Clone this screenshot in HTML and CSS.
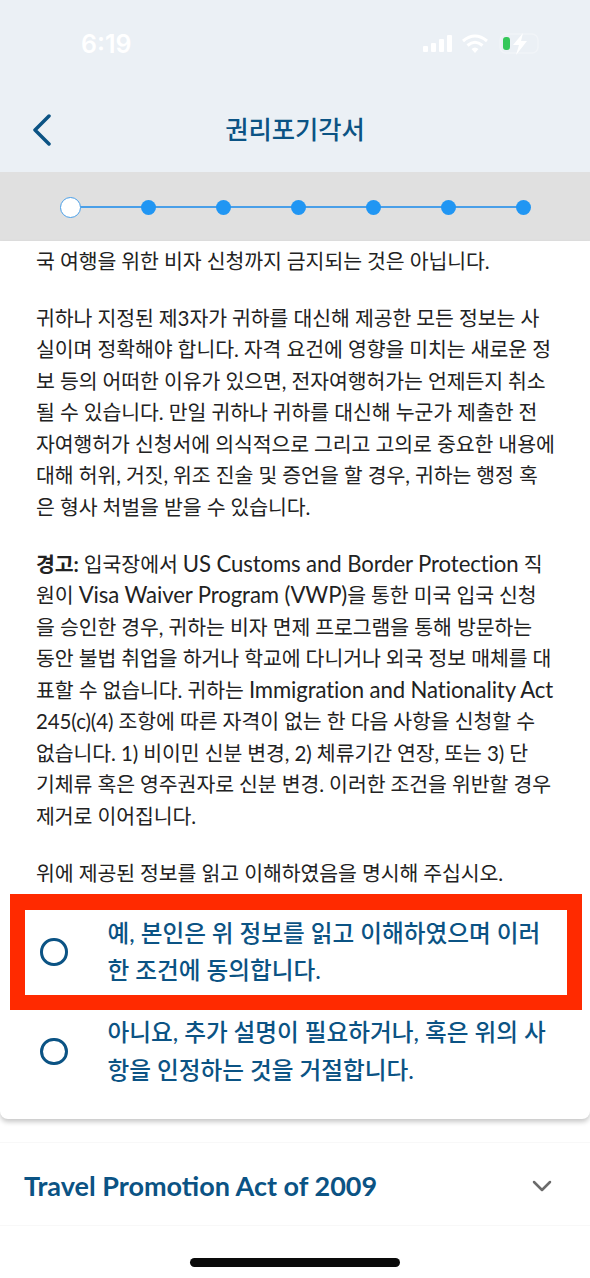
FILE: index.html
```html
<!DOCTYPE html>
<html lang="ko">
<head>
<meta charset="utf-8">
<title>권리포기각서</title>
<link rel="stylesheet" href="styles.css">
</head>
<body>
<div class="page">
  <header class="top">
    <div class="status">
      <span class="time">6:19</span>
      <svg class="status-icons" width="118" height="26" viewBox="0 0 118 26">
        <g fill="#fff">
          <rect x="2" y="15" width="5" height="6" rx="1"/>
          <rect x="10" y="12" width="5" height="9" rx="1"/>
          <rect x="18" y="8" width="5" height="13" rx="1"/>
          <rect x="26" y="4" width="5" height="17" rx="1"/>
        </g>
        <g fill="none" stroke="#fff" stroke-width="3">
          <path d="M42 10 Q54 0 66 10"/>
          <path d="M46.500 14.500 Q54 8 61.500 14.500"/>
        </g>
        <path d="M50.500 18 Q54 15 57.500 18 L54 22 Z" fill="#fff"/>
        <rect x="79" y="3" width="38" height="19" rx="6" fill="none" stroke="#fff" stroke-opacity=".3" stroke-width="1.500"/>
        <rect x="82" y="6" width="7" height="13" rx="3" fill="#34c759"/>
        <path d="M102 2 L92 14 H98 L95 24 L106 10 H100 Z" fill="#fff"/>
      </svg>
    </div>
    <div class="nav">
      <svg class="back" width="20" height="32" viewBox="0 0 20 32"><path d="M17 2 L3 16 L17 30" fill="none" stroke="#0b5384" stroke-width="3.500" stroke-linecap="round" stroke-linejoin="round"/></svg>
      <h1 class="title">권리포기각서</h1>
    </div>
  </header>
  <div class="stepper">
    <div class="track">
      <span class="dot current"></span>
      <span class="dot"></span>
      <span class="dot"></span>
      <span class="dot"></span>
      <span class="dot"></span>
      <span class="dot"></span>
      <span class="dot"></span>
    </div>
  </div>
  <main class="card">
    <p class="para first">국 여행을 위한 비자 신청까지 금지되는 것은 아닙니다.</p>
    <p class="para">귀하나 지정된 제3자가 귀하를 대신해 제공한 모든 정보는 사<br>실이며 정확해야 합니다. 자격 요건에 영향을 미치는 새로운 정<br>보 등의 어떠한 이유가 있으면, 전자여행허가는 언제든지 취소<br>될 수 있습니다. 만일 귀하나 귀하를 대신해 누군가 제출한 전<br>자여행허가 신청서에 의식적으로 그리고 고의로 중요한 내용에<br>대해 허위, 거짓, 위조 진술 및 증언을 할 경우, 귀하는 행정 혹<br>은 형사 처벌을 받을 수 있습니다.</p>
    <p class="para"><strong>경고:</strong> 입국장에서 <span class="latin">US Customs and Border Protection</span> 직<br>원이 <span class="latin">Visa Waiver Program (VWP)</span>을 통한 미국 입국 신청<br>을 승인한 경우, 귀하는 비자 면제 프로그램을 통해 방문하는<br>동안 불법 취업을 하거나 학교에 다니거나 외국 정보 매체를 대<br>표할 수 없습니다. 귀하는 <span class="latin">Immigration and Nationality Act</span><br>245(c)(4) 조항에 따른 자격이 없는 한 다음 사항을 신청할 수<br>없습니다. 1) 비이민 신분 변경, 2) 체류기간 연장, 또는 3) 단<br>기체류 혹은 영주권자로 신분 변경. 이러한 조건을 위반할 경우<br>제거로 이어집니다.</p>
    <p class="para">위에 제공된 정보를 읽고 이해하였음을 명시해 주십시오.</p>
    <div class="option highlighted">
      <span class="radio"></span>
      <span class="option-text">예, 본인은 위 정보를 읽고 이해하였으며 이러<br>한 조건에 동의합니다.</span>
    </div>
    <div class="option second">
      <span class="radio"></span>
      <span class="option-text">아니요, 추가 설명이 필요하거나, 혹은 위의 사<br>항을 인정하는 것을 거절합니다.</span>
    </div>
  </main>
  <section class="accordion">
    <h2 class="acc-title">Travel Promotion Act of 2009</h2>
    <svg class="chevron" width="20" height="12" viewBox="0 0 20 12"><path d="M2 2 L10 10 L18 2" fill="none" stroke="#6b6b6b" stroke-width="2.500" stroke-linecap="round" stroke-linejoin="round"/></svg>
  </section>
  <div class="home-area"><span class="home-bar"></span></div>
</div>
</body>
</html>
```
FILE: styles.css
```css
* { box-sizing: border-box; }
html, body { margin: 0; padding: 0; background: #fff; }
.page {
  width: 590px;
  height: 1278px;
  overflow: hidden;
  font-family: Lato, "Noto Sans CJK KR", sans-serif;
  background: #fff;
  color: #222;
}
.top { height: 172px; background: #ebf0f5; display: flex; flex-direction: column; }
.status { height: 88px; display: flex; justify-content: space-between; align-items: flex-start; padding: 27px 51px 0 81px; }
.time { font: 600 25px/34px Inter, sans-serif; color: #fff; }
.status-icons { margin-top: 4px; }
.nav { position: relative; flex: 1; display: flex; align-items: center; justify-content: center; padding-bottom: 2px; }
.back { position: absolute; left: 32px; top: 26px; }
.title { margin: 0; font-size: 25.300px; font-weight: 500; line-height: 36px; color: #0b5384; }
.stepper { height: 69px; background: #e0e0e0; padding: 1px 59.500px 0; display: flex; align-items: center; }
.track { position: relative; flex: 1; display: flex; justify-content: space-between; align-items: center; }
.track::before { content: ""; position: absolute; left: 10px; right: 10px; top: 50%; height: 2px; margin-top: -1px; background: #4a9fe8; }
.dot { position: relative; width: 15px; height: 15px; border-radius: 50%; background: #2196f3; }
.dot.current { width: 21px; height: 21px; background: #fff; border: 1.500px solid #4a9fe8; }
.card {
  position: relative;
  height: 878px;
  padding: 5px 0 0;
  background: #fff;
  border-radius: 0 0 8px 8px;
  box-shadow: 0 3px 5px rgba(0, 0, 0, .22);
}
.para { margin: 0 0 25.500px; padding: 0 36px; font-size: 20.500px; line-height: 31.500px; letter-spacing: -.1px; white-space: nowrap; }
.para.first { margin-bottom: 25px; }
.para strong { font-weight: 700; }
.latin { font-size: 22.150px; line-height: 1; }
.option { display: flex; align-items: center; color: #0b5384; font-size: 23.650px; font-weight: 500; line-height: 37.500px; }
.option-text { white-space: nowrap; }
.radio { flex: none; width: 27.500px; height: 27.500px; margin: 0 40px 0 40px; border-radius: 50%; border: 3px solid #0b5384; }
.highlighted { height: 116px; margin: -21px 8px 0 10px; border: 15px solid #ff2a00; border-top-width: 16px; }
.highlighted .radio { margin: 0 40px 0 15px; }
.second { height: 84px; }
.accordion {
  height: 84px;
  margin-top: 23px;
  padding: 3px 38px 0 24px;
  display: flex;
  align-items: center;
  justify-content: space-between;
  border-top: 1px solid #f8f8f8;
  border-bottom: 1px solid #f8f8f8;
}
.acc-title { margin: 0; font-size: 27px; font-weight: 700; color: #0b5384; }
.home-area { display: flex; justify-content: center; padding-top: 32px; }
.home-bar { width: 210px; height: 9px; border-radius: 5px; background: #0a0a0a; }
```
